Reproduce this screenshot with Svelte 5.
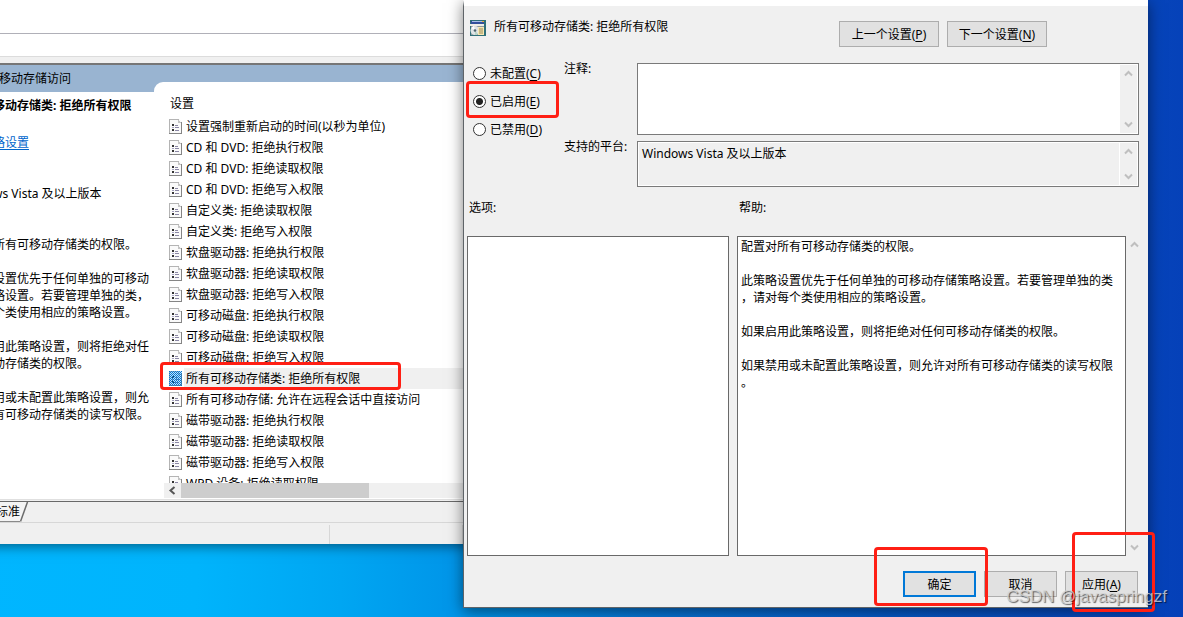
<script>
  const policies = [
    '设置强制重新启动的时间(以秒为单位)',
    'CD 和 DVD: 拒绝执行权限',
    'CD 和 DVD: 拒绝读取权限',
    'CD 和 DVD: 拒绝写入权限',
    '自定义类: 拒绝读取权限',
    '自定义类: 拒绝写入权限',
    '软盘驱动器: 拒绝执行权限',
    '软盘驱动器: 拒绝读取权限',
    '软盘驱动器: 拒绝写入权限',
    '可移动磁盘: 拒绝执行权限',
    '可移动磁盘: 拒绝读取权限',
    '可移动磁盘: 拒绝写入权限',
    '所有可移动存储类: 拒绝所有权限',
    '所有可移动存储: 允许在远程会话中直接访问',
    '磁带驱动器: 拒绝执行权限',
    '磁带驱动器: 拒绝读取权限',
    '磁带驱动器: 拒绝写入权限',
    'WPD 设备: 拒绝读取权限'
  ];
  let selected = $state(12);
  let mode = $state('E');
  let comment = $state('');

  const modes = [
    { key: 'C', text: '未配置' },
    { key: 'E', text: '已启用' },
    { key: 'D', text: '已禁用' }
  ];

  const help = [
    '配置对所有可移动存储类的权限。',
    '',
    '此策略设置优先于任何单独的可移动存储策略设置。若要管理单独的类',
    '\uff0c请对每个类使用相应的策略设置。',
    '',
    '如果启用此策略设置\uff0c则将拒绝对任何可移动存储类的权限。',
    '',
    '如果禁用或未配置此策略设置\uff0c则允许对所有可移动存储类的读写权限',
    '。'
  ].join('\n');
</script>

{#snippet chevron(dir)}
  <svg class="chev" width="9" height="7" viewBox="0 0 9 7" aria-hidden="true">
    <path d={dir === 'up' ? 'M1 5.5 4.5 2 8 5.5' : 'M1 1.5 4.5 5 8 1.5'} fill="none" stroke="#bfbfbf" stroke-width="2" />
  </svg>
{/snippet}

{#snippet scroller()}
  <div class="scroller">
    {@render chevron('up')}
    {@render chevron('down')}
  </div>
{/snippet}

<main class="desktop">
  <section class="console" aria-label="可移动存储访问">
    <div class="menu"></div>
    <div class="toolbar"></div>
    <div class="gutter"></div>
    <div class="body">
      <div class="detail">
        <h2>可移动存储访问</h2>
        <div class="info">
          <h3>所有可移动存储类: 拒绝所有权限</h3>
          <a href="#edit">编辑策略设置</a>
          <p>要求:<br />Windows Vista 及以上版本</p>
          <p>描述:<br />配置对所有可移动存储类的权限。</p>
          <p>此策略设置优先于任何单独的可移动存储策略设置。若要管理单独的类&#xff0c;请对每个类使用相应的策略设置。</p>
          <p>如果启用此策略设置&#xff0c;则将拒绝对任何可移动存储类的权限。</p>
          <p>如果禁用或未配置此策略设置&#xff0c;则允许对所有可移动存储类的读写权限。</p>
        </div>
      </div>
      <div class="listing">
        <div class="column">设置</div>
        <ul>
          {#each policies as policy, i}
            <li>
              <button class="row" class:selected={i === selected} onclick={() => (selected = i)}>
                <svg width="13" height="15" viewBox="0 0 13 15" shape-rendering="crispEdges" aria-hidden="true">
                  <path d="M0 0h10l3 3v12H0z" fill="#fafafa" />
                  <path d="M0 0h10v1H0zM0 0h1v15H0z" fill="#b4b4b4" />
                  <path d="M9 1h1v1h1v1h1v1H9z" fill="#c4c4c4" />
                  <path d="M12 3h1v12h-1zM0 14h13v1H0z" fill="#858585" />
                  <path d="M3 5h2v2H3zM3 10h2v2H3z" fill="#333" />
                  <path d="M3 8h2v1H3z" fill="#a5a2c0" />
                  <path d="M6 6h3v1H6zM6 8h4v1H6zM6 11h4v1H6z" fill="#8b87a5" />
                  {#if i === selected}
                    <defs>
                      <pattern id="dither" width="2" height="2" patternUnits="userSpaceOnUse">
                        <path d="M0 0h1v1H0zM1 1h1v1H1z" fill="#0078d7" />
                      </pattern>
                    </defs>
                    <path d="M0 0h13v15H0z" fill="#0078d7" fill-opacity=".2" />
                    <path d="M0 0h13v15H0z" fill="url(#dither)" />
                  {/if}
                </svg>
                <span>{policy}</span>
              </button>
            </li>
          {/each}
        </ul>
        <div class="hscroll">
          <svg width="17" height="15" viewBox="0 0 17 15" aria-hidden="true">
            <path d="M10.500 4 6.500 7.500 10.500 11" fill="none" stroke="#555" stroke-width="2" />
          </svg>
          <div class="thumb"></div>
        </div>
      </div>
    </div>
    <div class="tabs">
      <button class="tab">标准</button>
      <svg width="9" height="20" viewBox="0 0 9 20" aria-hidden="true">
        <path d="M0 0H8L1 19.500H0z" fill="#f4f4f4" />
        <path d="M7.500 0 .5 19.500" stroke="#6b6b6b" stroke-width="1.500" fill="none" />
      </svg>
    </div>
    <div class="status"><span></span><span></span></div>
  </section>

  <section class="dialog" aria-label="所有可移动存储类: 拒绝所有权限">
    <header>
      <svg width="16" height="16" viewBox="0 0 16 16" aria-hidden="true">
        <path d="M0 0h16v16H0z" fill="#2f6f78" />
        <path d="M1 1h13v3H1z" fill="#34509c" />
        <path d="M2 1h10v1H2z" fill="#a9bde8" />
        <path d="M0 4h14v2H0z" fill="#efeee6" />
        <path d="M1 6h13v9H1z" fill="#8d9a9e" />
        <circle cx="5" cy="10.500" r="4.500" fill="#dfe4e6" />
        <path d="M5 10.500 1.500 8A4.500 4.500 0 0 1 4 6z" fill="#fff" />
        <path d="M5 10.500 8 14a4.500 4.500 0 0 1-3 1z" fill="#b9d4c6" />
        <circle cx="5" cy="10.500" r="1.300" fill="#4d6470" />
        <path d="M8 7h6v8H8z" fill="#f6e8b4" />
        <path d="M9 9h4M9 11h4M9 13h4" stroke="#9a8a58" />
        <path d="M12 1h2v1h-2z" fill="#e7b13a" />
      </svg>
      <h1>所有可移动存储类: 拒绝所有权限</h1>
      <div class="nav">
        <button class="btn wide">上一个设置(<u>P</u>)</button>
        <button class="btn wide">下一个设置(<u>N</u>)</button>
      </div>
    </header>

    <div class="config">
      <div class="radios" role="radiogroup" aria-label="状态">
        {#each modes as m}
          <label><input type="radio" name="mode" value={m.key} bind:group={mode} /><span>{m.text}(<u>{m.key}</u>)</span></label>
        {/each}
      </div>
      <div class="fields">
        <label for="comment">注释:</label>
        <div class="box note">
          <textarea id="comment" bind:value={comment}></textarea>
          {@render scroller()}
        </div>
        <label for="platform">支持的平台:</label>
        <div class="box platform">
          <textarea id="platform" readonly value="Windows Vista 及以上版本"></textarea>
          {@render scroller()}
        </div>
      </div>
    </div>

    <div class="panes">
      <span class="cap">选项:</span>
      <label class="cap" for="help">帮助:</label>
      <div class="pane"></div>
      <div class="helparea">
        <textarea class="pane" id="help" readonly value={help}></textarea>
        {@render scroller()}
      </div>
    </div>

    <footer>
      <button class="btn primary">确定</button>
      <button class="btn">取消</button>
      <button class="btn">应用(<u>A</u>)</button>
    </footer>
  </section>

  <i class="mark policy"></i>
  <i class="mark enabled"></i>
  <i class="mark ok"></i>
  <i class="mark apply"></i>
  <div class="credit">CSDN @javaspringzf</div>
</main>

<style>
  :global(body) {
    overflow: hidden;
  }
  .desktop {
    position: relative;
    height: 100vh;
    overflow: hidden;
    background: linear-gradient(92deg, #00b6ff 0%, #00b4fc 18%, #00a6f2 30%, #0094e8 40%, #0674d4 56%, #0558c6 76%, #0748bc 92%, #0540b8 100%);
    font: 12px/17px 'Noto Sans', 'Noto Sans CJK SC', sans-serif;
    color: #000;
  }
  h1, h2, h3, p, ul {
    margin: 0;
    padding: 0;
    font-size: 12px;
    font-weight: 400;
  }
  button, textarea {
    font: inherit;
    color: inherit;
  }
  textarea {
    display: block;
    box-sizing: border-box;
    resize: none;
    border: 0;
    outline: 0;
    margin: 0;
    overflow: hidden;
  }
  u {
    text-underline-offset: 2px;
  }

  /* policy console */
  .console {
    position: absolute;
    top: 0;
    left: -60px;
    width: 620px;
    background: #f0f0f0;
    box-shadow: 0 2px 12px rgba(0, 0, 0, 0.5);
  }
  .menu {
    height: 33px;
    background: #fff;
    border-bottom: 1px solid #b0b0b8;
  }
  .toolbar {
    height: 22px;
    background: #fff;
    border-bottom: 1px solid #dcdcdc;
  }
  .gutter {
    height: 6px;
    border-bottom: 2px solid #767676;
  }
  .body {
    display: flex;
    background: #99b4d1;
    border-bottom: 1px solid #e0e0e0;
  }
  .detail {
    display: flex;
    flex-direction: column;
    width: 214px;
  }
  .detail h2 {
    padding: 5px 0 5px 47px;
  }
  .info {
    flex: 1;
    padding: 5px 4px 0 17px;
    background: #fff;
  }
  .info h3 {
    font-weight: 700;
    white-space: nowrap;
    margin-bottom: 20px;
  }
  .info a {
    display: block;
    color: #0066cc;
    text-underline-offset: 2px;
  }
  .info p {
    margin-top: 17px;
  }
  .listing {
    flex: 1;
    min-width: 0;
    margin-top: 17px;
    background: #fff;
    border-top-left-radius: 9px;
  }
  .column {
    padding: 13px 16px 4px;
  }
  ul {
    height: 367px;
    overflow: hidden;
    list-style: none;
  }
  .row {
    display: flex;
    align-items: center;
    width: 100%;
    height: 21px;
    padding: 0 0 0 15px;
    border: 0;
    background: none;
    text-align: left;
  }
  .row svg {
    flex: none;
  }
  .row span {
    flex: 1;
    margin-left: 2px;
    padding: 2px;
    white-space: nowrap;
  }
  .row.selected span {
    background: #f0f0f0;
  }
  .hscroll {
    display: flex;
    height: 15px;
    margin: 0 0 1px 10px;
    background: #f0f0f0;
  }
  .thumb {
    width: 188px;
    background: #cdcdcd;
  }
  .tabs {
    display: flex;
    height: 20px;
    margin-top: 1px;
    border-top: 1px solid #696969;
    border-bottom: 1px solid #d7d7d7;
  }
  .tab {
    width: 80px;
    padding: 0;
    border: 0;
    border-bottom: 1px solid #8a8a8a;
    background: #f4f4f4;
    text-align: right;
  }
  .status {
    display: flex;
    height: 21px;
  }
  .status span {
    width: 132px;
    margin-top: 2px;
    border-right: 1px solid #d7d7d7;
  }
  .status span:first-child {
    width: 389px;
  }

  /* setting dialog */
  .dialog {
    position: absolute;
    top: 0;
    left: 463px;
    right: 35px;
    border: 1px solid #5f6468;
    border-top: 6px solid #fff;
    border-right-width: 0;
    background: #f0f0f0;
    box-shadow: 0 3px 14px rgba(0, 0, 0, 0.5);
  }
  header {
    display: flex;
    align-items: flex-start;
    padding: 14px 101px 0 6px;
  }
  header h1 {
    flex: 1;
    margin: -2px 0 0 8px;
  }
  .nav {
    display: flex;
    gap: 8px;
    margin-top: 1px;
  }
  .btn {
    box-sizing: border-box;
    width: 73px;
    height: 26px;
    padding: 0;
    border: 1px solid #adadad;
    background: #e1e1e1;
  }
  .wide {
    width: 100px;
  }
  .primary {
    border: 2px solid #0078d7;
  }
  .config {
    display: flex;
    margin-top: 16px;
    padding-right: 9px;
  }
  .radios {
    display: flex;
    flex-direction: column;
    gap: 11px;
    width: 91px;
    padding: 2px 0 0 9px;
  }
  .radios label {
    display: flex;
    align-items: center;
    gap: 4px;
  }
  .radios input {
    appearance: none;
    box-sizing: border-box;
    flex: none;
    width: 13px;
    height: 13px;
    margin: 0;
    border: 1px solid #333;
    border-radius: 50%;
    background: #fff;
  }
  .radios input:checked {
    background: radial-gradient(circle, #222 3px, #fff 4px);
  }
  .fields {
    flex: 1;
    display: grid;
    grid-template-columns: 73px 1fr;
    row-gap: 6px;
    line-height: 12px;
  }
  .box {
    display: flex;
    border: 1px solid #7a7a7a;
    padding: 1px;
    background: #fff;
    line-height: 17px;
  }
  .box textarea {
    flex: 1;
    padding: 2px 3px;
    background: #fff;
  }
  .note {
    height: 68px;
  }
  .platform {
    height: 42px;
  }
  .platform textarea {
    background: #f0f0f0;
    margin-right: 1px;
  }
  .scroller {
    box-sizing: border-box;
    display: flex;
    flex-direction: column;
    justify-content: space-between;
    align-items: center;
    width: 17px;
    padding: 5px 0;
    background: #f0f0f0;
  }
  .chev {
    display: block;
  }
  .panes {
    display: grid;
    grid-template-columns: 262px 1fr;
    column-gap: 8px;
    margin-top: 12px;
    padding: 0 5px 0 3px;
  }
  .cap {
    padding: 0 2px 20px;
  }
  .pane {
    box-sizing: border-box;
    height: 320px;
    border: 1px solid #696969;
    background: #fff;
  }
  .helparea {
    display: flex;
  }
  .helparea textarea {
    flex: 1;
    min-width: 0;
    padding: 1px 3px;
  }
  footer {
    display: flex;
    justify-content: flex-end;
    gap: 8px;
    padding: 15px 10px 10px;
  }

  /* highlight frames and credit over the windows */
  .mark {
    position: absolute;
    box-sizing: border-box;
    border: 3px solid #ff1f14;
    border-radius: 4px;
    pointer-events: none;
  }
  .policy {
    left: 160px;
    top: 362px;
    width: 241px;
    height: 28px;
  }
  .enabled {
    left: 466px;
    top: 81px;
    width: 93px;
    height: 37px;
  }
  .ok {
    left: 874px;
    top: 547px;
    width: 114px;
    height: 59px;
  }
  .apply {
    left: 1072px;
    top: 532px;
    width: 83px;
    height: 80px;
  }
  .credit {
    position: absolute;
    right: 16px;
    bottom: 10px;
    font: 17px/20px 'Liberation Sans', sans-serif;
    color: rgba(215, 215, 215, 0.8);
    text-shadow: 1px 1px 1px rgba(0, 0, 0, 0.6);
    pointer-events: none;
  }
</style>
